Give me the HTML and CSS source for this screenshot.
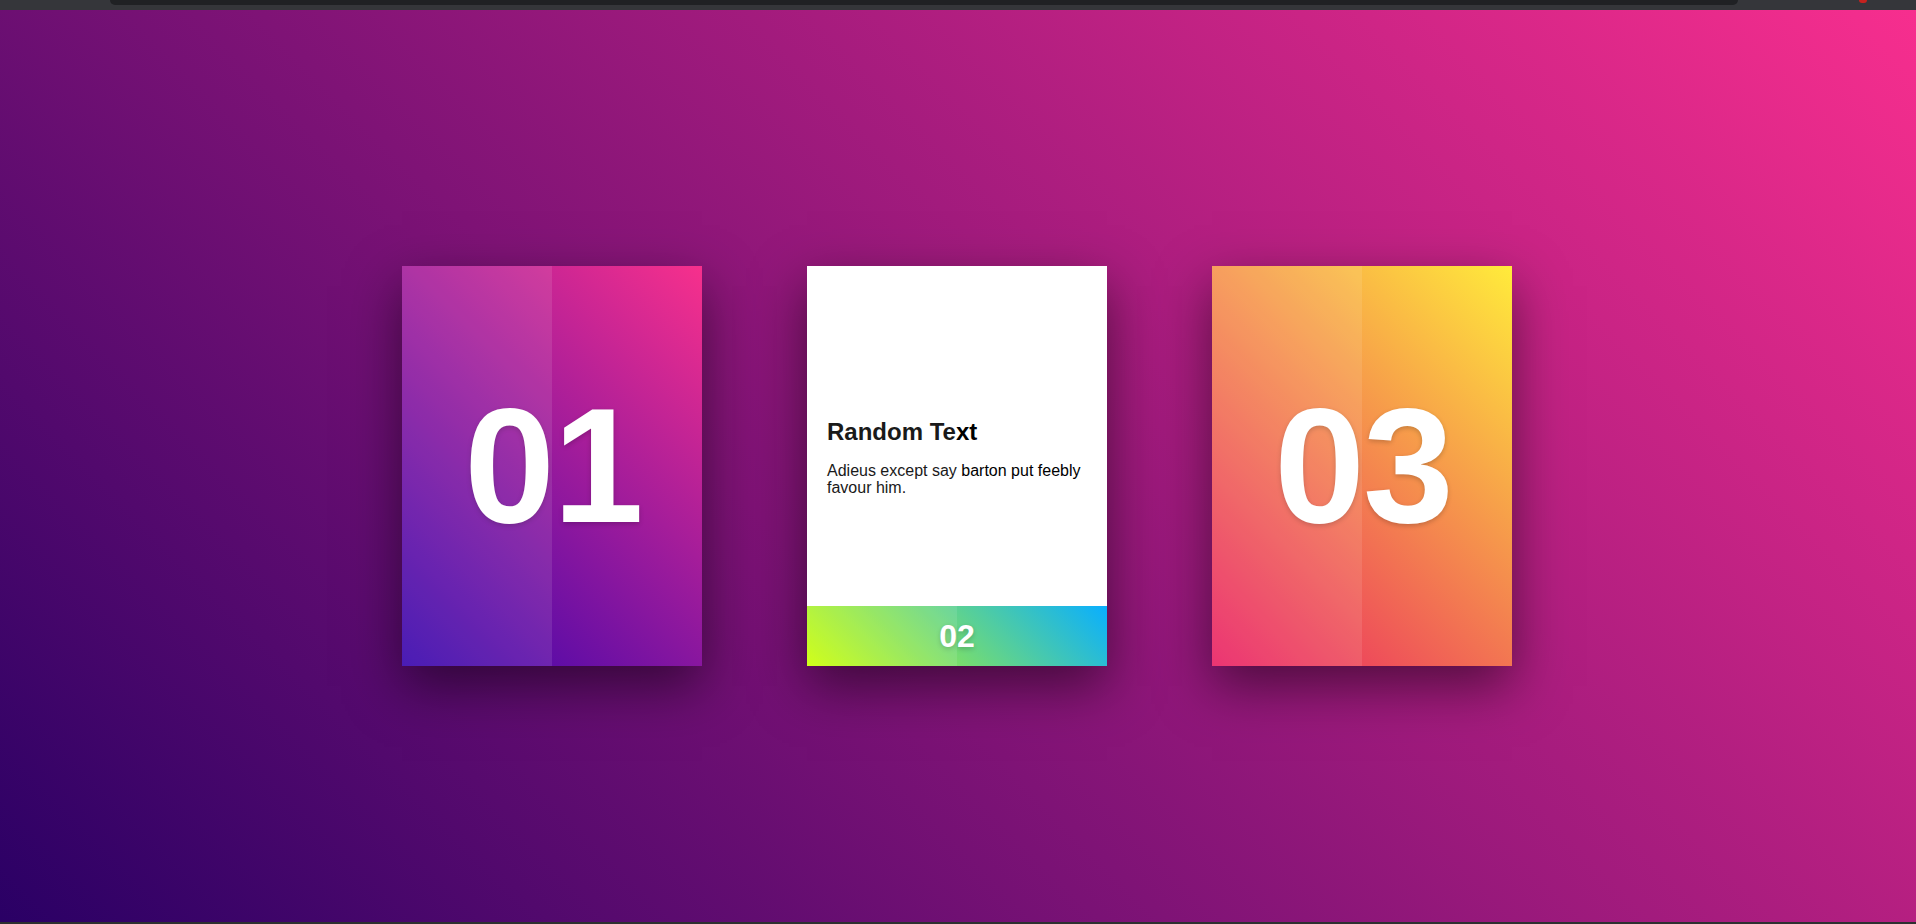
FILE: index.html
```html
<!DOCTYPE html>
<html lang="en">
<head>
<meta charset="utf-8">
<title>Cards</title>
<link rel="stylesheet" href="styles.css">
</head>
<body>
  <div class="page">
    <div class="chrome">
      <div class="chrome-bar"></div>
      <span class="chrome-dot"></span>
    </div>
    <main class="stage">
      <div class="card card-one">
        <div class="num">01</div>
      </div>
      <div class="card card-two">
        <div class="content">
          <h3 class="title">Random Text</h3>
          <p class="desc">Adieus except say barton put feebly favour him.</p>
        </div>
        <div class="footer">
          <span class="footer-num">02</span>
        </div>
      </div>
      <div class="card card-three">
        <div class="num">03</div>
      </div>
    </main>
    <div class="bottom-line"></div>
  </div>
</body>
</html>
```

FILE: styles.css
```css
* { box-sizing: border-box; }

html, body {
  margin: 0;
  padding: 0;
  height: 100%;
}

body {
  font-family: "Liberation Sans", Arial, sans-serif;
  overflow: hidden;
}

.page {
  height: 924px;
  display: flex;
  flex-direction: column;
}

.chrome {
  height: 10px;
  background: #35363a;
  position: relative;
  flex: none;
}

.chrome-bar {
  margin-left: 110px;
  width: 1628px;
  height: 5px;
  background: #202124;
  border-radius: 0 0 6px 6px;
}

.chrome-dot {
  position: absolute;
  left: 1859px;
  top: 0;
  width: 8px;
  height: 3px;
  border-radius: 0 0 4px 4px;
  background: #c5221f;
}

.stage {
  flex: 1;
  display: flex;
  align-items: center;
  justify-content: center;
  gap: 105px;
  padding-right: 2px;
  background: linear-gradient(45deg, #2a0065, #f72e8e);
}

.bottom-line {
  height: 2px;
  background: #2d3030;
  flex: none;
}

.card {
  position: relative;
  width: 300px;
  height: 400px;
  box-shadow: 0 20px 50px rgba(0, 0, 0, 0.5);
  display: flex;
  overflow: hidden;
}

.card::before {
  content: "";
  position: absolute;
  left: 0;
  top: 0;
  width: 50%;
  height: 100%;
  background: rgba(255, 255, 255, 0.1);
  pointer-events: none;
  z-index: 2;
}

.card-one {
  background: linear-gradient(45deg, #3503ad, #f7308c);
  align-items: center;
  justify-content: center;
}

.card-three {
  background: linear-gradient(45deg, #e91e63, #ffeb3b);
  align-items: center;
  justify-content: center;
}

.num {
  color: #fff;
  font-weight: 700;
  font-size: 163px;
  padding-left: 2px;
  letter-spacing: -2px;
  text-shadow: 0 2px 5px rgba(0, 0, 0, 0.2);
}

.card-two {
  background: #fff;
  flex-direction: column;
}

.content {
  flex: 1;
  padding: 152px 20px 0 20px;
  color: #000;
}

.title {
  margin: 0;
  font-size: 24px;
  font-weight: 700;
  line-height: 27.6px;
}

.desc {
  margin: 16px 0 0 0;
  font-size: 16px;
  line-height: 17px;
}

.footer {
  height: 60px;
  flex: none;
  background: linear-gradient(45deg, #ccff00, #09afff);
  display: flex;
  align-items: center;
  justify-content: center;
}

.footer-num {
  color: #fff;
  font-weight: 700;
  font-size: 32px;
  text-shadow: 0 2px 5px rgba(0, 0, 0, 0.2);
}
```
